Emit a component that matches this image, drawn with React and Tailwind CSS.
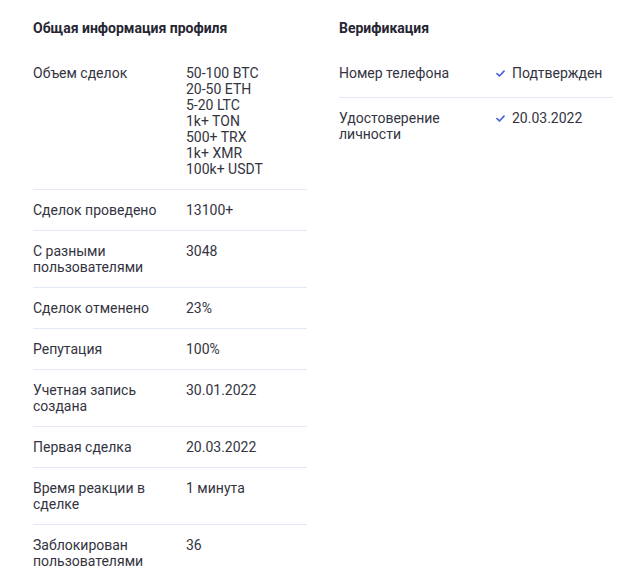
import React from "react";

const profile = [
  {
    label: "Объем сделок",
    value: ["50-100 BTC", "20-50 ETH", "5-20 LTC", "1k+ TON", "500+ TRX", "1k+ XMR", "100k+ USDT"],
  },
  { label: "Сделок проведено", value: ["13100+"] },
  { label: "С разными пользователями", value: ["3048"] },
  { label: "Сделок отменено", value: ["23%"] },
  { label: "Репутация", value: ["100%"] },
  { label: "Учетная запись создана", value: ["30.01.2022"] },
  { label: "Первая сделка", value: ["20.03.2022"] },
  { label: "Время реакции в сделке", value: ["1 минута"] },
  { label: "Заблокирован пользователями", value: ["36"] },
];

const verification = [
  { label: "Номер телефона", value: "Подтвержден" },
  { label: "Удостоверение личности", value: "20.03.2022" },
];

const Check = () => (
  <svg width="9" height="7" viewBox="0 0 9 7" fill="none" className="shrink-0 mt-[1px]">
    <path d="M1 3.6 3.5 6 8 1.2" stroke="#4a63e0" strokeWidth="1.7" strokeLinecap="round" strokeLinejoin="round" />
  </svg>
);

const App = () => {
  return (
    <div
      className="w-[642px] min-h-[587px] bg-white pl-[33px] pt-[20px] text-[14px] leading-4 text-[#34343f]"
      style={{ fontFamily: "Roboto, 'Liberation Sans', sans-serif" }}
    >
      <div className="flex gap-8">
        <div className="w-[274px] shrink-0">
          <h2 className="text-[14px] leading-4 font-bold text-[#262633] mb-[17px]">Общая информация профиля</h2>
          {profile.map((row, i) => (
            <div
              key={row.label}
              className={`flex py-3 ${i < profile.length - 1 ? "border-b border-[#e4e9f6]" : ""}`}
            >
              <div className="w-[153px] shrink-0 pr-4">{row.label}</div>
              <div className="flex flex-col">
                {row.value.map((v) => (
                  <span key={v}>{v}</span>
                ))}
              </div>
            </div>
          ))}
        </div>
        <div className="w-[274px] shrink-0">
          <h2 className="text-[14px] leading-4 font-bold text-[#262633] mb-[17px]">Верификация</h2>
          {verification.map((row, i) => (
            <div
              key={row.label}
              className={`flex py-3 ${i < verification.length - 1 ? "border-b border-[#e4e9f6] min-h-[45px]" : ""}`}
            >
              <div className="w-[157px] shrink-0 pr-4">{row.label}</div>
              <div className="flex items-center gap-[7px] h-4">
                <Check />
                <span>{row.value}</span>
              </div>
            </div>
          ))}
        </div>
      </div>
    </div>
  );
};

export default App;
